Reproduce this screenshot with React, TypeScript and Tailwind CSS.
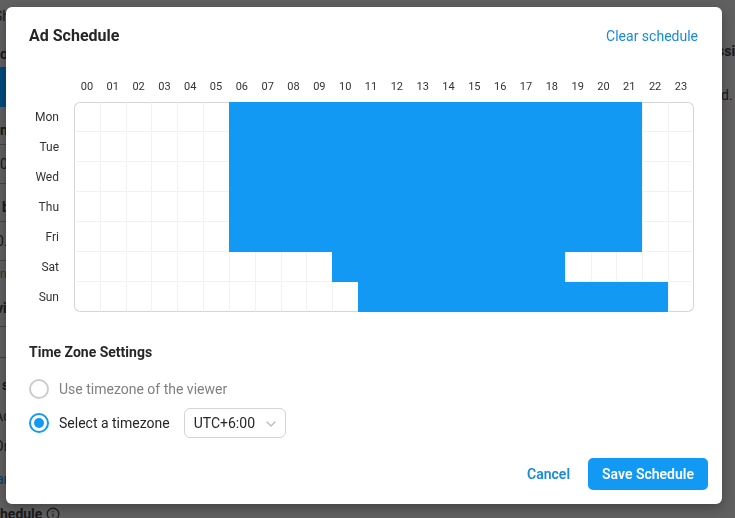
import { Info, ChevronDown } from 'lucide-react';

const HOURS = Array.from({ length: 24 }, (_, hour) => hour);

const DAYS = [
  { name: 'Mon', from: 6, to: 22 },
  { name: 'Tue', from: 6, to: 22 },
  { name: 'Wed', from: 6, to: 22 },
  { name: 'Thu', from: 6, to: 22 },
  { name: 'Fri', from: 6, to: 22 },
  { name: 'Sat', from: 10, to: 19 },
  { name: 'Sun', from: 11, to: 23 },
];

function cellClass(row: number, hour: number, active: boolean) {
  const last = row === DAYS.length - 1;
  const classes = ['h-[30px] p-0 border-l border-b'];
  if (row === 0) classes.push('border-t');
  if (hour === 23) classes.push('border-r border-r-[#d5d5d5]');
  if (active) {
    classes.push('bg-[#1299f4] border-[#1299f4]');
  } else {
    classes.push(hour === 0 ? 'border-l-[#d5d5d5]' : 'border-l-[#f2f2f2]');
    classes.push(last ? 'border-b-[#d5d5d5]' : 'border-b-[#f2f2f2]');
    if (row === 0) classes.push('border-t-[#d5d5d5]');
  }
  if (row === 0 && hour === 0) classes.push('rounded-tl-md');
  if (row === 0 && hour === 23) classes.push('rounded-tr-md');
  if (last && hour === 0) classes.push('rounded-bl-md');
  if (last && hour === 23) classes.push('rounded-br-md');
  return classes.join(' ');
}

function ScheduleTable() {
  return (
    <table className="w-full table-fixed border-separate border-spacing-0 text-xs text-[#333333]">
      <thead>
        <tr>
          <th className="w-[46px] p-0" aria-label="Day"></th>
          {HOURS.map(hour => (
            <th key={hour} scope="col" className="h-8 p-0 pt-[2px] text-center text-[11px] font-normal">
              {String(hour).padStart(2, '0')}
            </th>
          ))}
        </tr>
      </thead>
      <tbody>
        {DAYS.map((day, row) => (
          <tr key={day.name}>
            <th scope="row" className="h-[30px] p-0 pr-[15px] text-right font-normal">
              {day.name}
            </th>
            {HOURS.map(hour => (
              <td key={hour} className={cellClass(row, hour, hour >= day.from && hour < day.to)}></td>
            ))}
          </tr>
        ))}
      </tbody>
    </table>
  );
}

/* Settings page behind the dialog */
function PageBehind() {
  return (
    <div className="flex min-h-screen justify-between whitespace-nowrap bg-[#606060] text-sm leading-5 text-[#1a1a1a]">
      <div className="w-16">
        <p className="-ml-[6px] pt-[6px]">Sh</p>
        <p className="pt-[18px] font-bold">o</p>
        <div className="mt-[3px] h-10 bg-[#004b7c]"></div>
        <p className="pt-[13px] font-bold">n</p>
        <div className="mt-1 flex h-10 items-center border-y border-[#454545]">0</div>
        <p className="pl-[2px] pt-[13px] font-bold">b</p>
        <div className="mt-1 flex h-10 items-center border-y border-[#454545]">
          <span className="-ml-1">0.</span>
        </div>
        <p className="pt-[3px] text-xs leading-5 text-[#333333]">n</p>
        <p className="-ml-1 pt-[14px] font-bold">vi</p>
        <div className="mt-2 h-8 border-y border-[#454545]"></div>
        <p className="pl-[2px] pt-[17px] font-bold">s</p>
        <p className="-ml-[6px] pt-[11px]">Ad</p>
        <p className="-ml-[6px] pt-[10px]">On</p>
        <p className="-ml-1 pt-[13px] text-[#003f6b]">an</p>
        <p className="flex items-center gap-1 pt-[15px] font-bold">
          hedule <Info size={14} strokeWidth={2} className="shrink-0" />
        </p>
      </div>
      <div className="w-[18px]">
        <p className="pt-[41px] font-bold">ssi</p>
        <p className="pl-1 pt-[24px]">d.</p>
      </div>
    </div>
  );
}

export default function App() {
  return (
    <div className="h-screen overflow-hidden font-[Roboto,sans-serif]">
      <PageBehind />
      <div className="fixed inset-0 pb-[14px] pl-[6px] pr-[13px] pt-[7px]">
        <div
          role="dialog"
          aria-labelledby="dialog-title"
          className="rounded-md bg-white pb-[14px] pt-[18px] text-sm leading-5 text-[#262626] shadow-[0_4px_12px_rgba(0,0,0,0.3)]"
        >
          <div className="flex items-center justify-between pl-[23px] pr-6">
            <h2 id="dialog-title" className="text-base font-bold leading-[22px]">Ad Schedule</h2>
            <button type="button" className="text-[#168bd8]">Clear schedule</button>
          </div>

          <div className="pl-[22px] pr-7 pt-[23px]">
            <ScheduleTable />
          </div>

          <section className="pl-[23px] pt-[30px]">
            <h3 className="font-bold">Time Zone Settings</h3>
            <div className="flex items-center gap-[10px] pt-[17px]">
              <input
                type="radio"
                id="tz-viewer"
                name="tz"
                className="size-5 appearance-none rounded-full border-2 border-[#cccccc]"
              />
              <label htmlFor="tz-viewer" className="text-[#808080]">Use timezone of the viewer</label>
            </div>
            <div className="flex items-center gap-[10px] pt-[9px]">
              <input
                type="radio"
                id="tz-select"
                name="tz"
                defaultChecked
                className="size-5 appearance-none rounded-full border-2 border-[#1299f4] bg-[#1299f4] bg-clip-content p-[3px]"
              />
              <label htmlFor="tz-select">Select a timezone</label>
              <div className="relative ml-1">
                <select
                  aria-label="Timezone"
                  className="block h-[30px] w-[102px] appearance-none rounded-md border border-[#d5d5d5] bg-white pl-[9px] text-sm"
                >
                  <option>UTC+6:00</option>
                </select>
                <ChevronDown
                  size={16}
                  strokeWidth={2}
                  className="pointer-events-none absolute right-[7px] top-2 text-[#bbbbbb]"
                />
              </div>
            </div>
          </section>

          <div className="flex items-center justify-end gap-[18px] pr-[14px] pt-5">
            <button type="button" className="font-semibold text-[#168bd8]">Cancel</button>
            <button type="button" className="h-8 rounded-[5px] bg-[#1299f4] px-[14px] font-semibold text-white">
              Save Schedule
            </button>
          </div>
        </div>
      </div>
    </div>
  );
}
